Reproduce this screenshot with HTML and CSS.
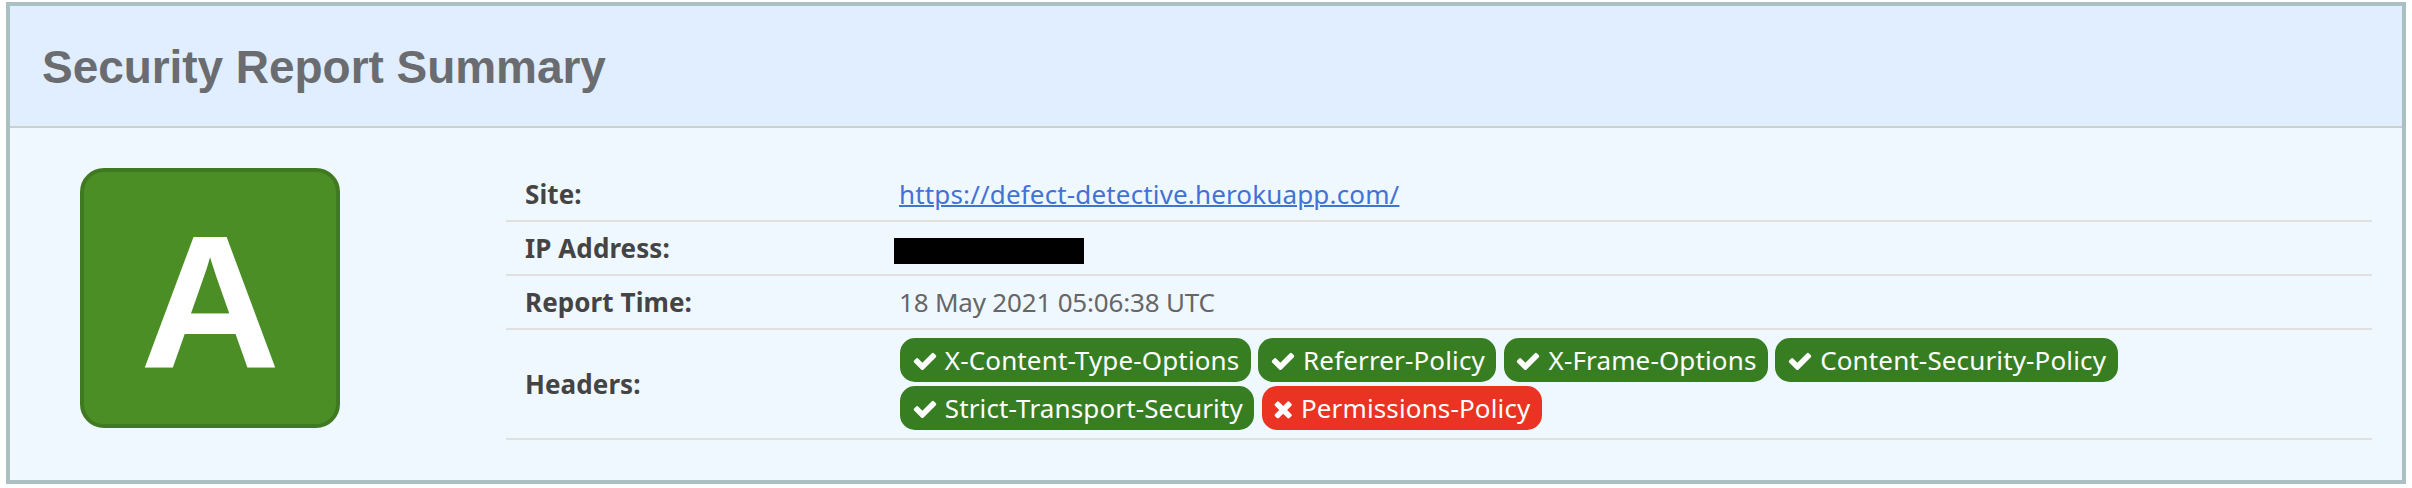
FILE: index.html
```html
<!DOCTYPE html>
<html lang="en">
<head>
<meta charset="utf-8">
<title>Security Report Summary</title>
<link rel="stylesheet" href="styles.css">
</head>
<body>
<svg class="defs" aria-hidden="true">
  <symbol id="check" viewBox="0 0 1792 1792"><path d="M1671 566q0 40-28 68l-724 724-136 136q-28 28-68 28t-68-28l-136-136-362-362q-28-28-28-68t28-68l136-136q28-28 68-28t68 28l294 295 656-657q28-28 68-28t68 28l136 136q28 28 28 68z"/></symbol>
  <symbol id="times" viewBox="192 0 1408 1792"><path d="M1490 1322q0 40-28 68l-136 136q-28 28-68 28t-68-28l-294-294-294 294q-28 28-68 28t-68-28l-136-136q-28-28-28-68t28-68l294-294-294-294q-28-28-28-68t28-68l136-136q28-28 68-28t68 28l294 294 294-294q28-28 68-28t68 28l136 136q28 28 28 68t-28 68l-294 294 294 294q28 28 28 68z"/></symbol>
</svg>
<section class="report">
  <header class="report-header"><h1 class="report-title">Security Report Summary</h1></header>
  <div class="report-body">
    <div class="grade"><span class="grade-letter">A</span></div>
    <div class="table">
      <div class="row"><div class="label">Site:</div><div class="value"><a class="link" href="https://defect-detective.herokuapp.com/">https://defect-detective.herokuapp.com/</a></div></div>
      <div class="row"><div class="label">IP Address:</div><div class="value"><div class="redacted"></div></div></div>
      <div class="row"><div class="label">Report Time:</div><div class="value time">18 May 2021 05:06:38 UTC</div></div>
      <div class="row row-headers"><div class="label">Headers:</div><div class="value pills">
        <span class="pill"><svg class="icon"><use href="#check"/></svg> X-Content-Type-Options</span>
        <span class="pill"><svg class="icon"><use href="#check"/></svg> Referrer-Policy</span>
        <span class="pill"><svg class="icon"><use href="#check"/></svg> X-Frame-Options</span>
        <span class="pill"><svg class="icon"><use href="#check"/></svg> Content-Security-Policy</span>
        <span class="pill"><svg class="icon"><use href="#check"/></svg> Strict-Transport-Security</span>
        <span class="pill pill-bad"><svg class="icon icon-times"><use href="#times"/></svg> Permissions-Policy</span>
      </div></div>
    </div>
  </div>
</section>
</body>
</html>
```
FILE: styles.css
```css
* { box-sizing: border-box; }
body { margin: 0; padding: 2px 6px 4px; background: #fff; font-family: "Noto Sans", sans-serif; font-size: 26px; color: #666; }
.defs { display: none; }
.report { height: 482px; border: 4px solid #abc0c1; background: #f0f8ff; }
.report-header { height: 122px; padding: 2px 0 0 32px; display: flex; align-items: center; background: #e0eeff; border-bottom: 2px solid #c8d1d2; }
.report-title { margin: 0; font: bold 46px/56px "Liberation Sans", Arial, sans-serif; letter-spacing: -0.05px; color: #6a6c70; }
.report-body { display: flex; padding: 40px 30px 0 70px; }
.grade { width: 260px; height: 260px; margin-right: 166px; padding-top: 9px; flex: none; display: flex; align-items: center; justify-content: center; background: #4b8e26; border: 4px solid #3f7a20; border-radius: 24px; }
.grade-letter { font: bold 188.5px/1 "Liberation Sans", Arial, sans-serif; color: #fff; transform: scaleX(1.03); }
.table { flex: 1; }
.row { display: flex; height: 54px; align-items: center; padding-left: 19px; border-bottom: 2px solid #e0e0e0; line-height: 52px; }
.row-headers { height: 110px; }
.label { width: 374px; flex: none; font-weight: bold; letter-spacing: 0.09px; color: #444; }
.value { flex: 1; }
.link { color: #4372d6; letter-spacing: 0.15px; text-decoration-thickness: 2px; }
.time { letter-spacing: -0.19px; }
.redacted { width: 190px; height: 26px; margin: 6px 0 0 -5px; background: #000; }
.pills { line-height: 48px; padding-left: 1px; letter-spacing: 0.14px; word-spacing: 0.4px; }
.pill { display: inline-block; line-height: 44px; padding: 0 11.5px; border-radius: 15px; background: #377e22; color: #fff; white-space: nowrap; }
.pill-bad { background: #ea3323; }
.icon { width: 26px; height: 26px; vertical-align: -3.7px; fill: currentColor; }
.icon-times { width: 20.4px; }
```
